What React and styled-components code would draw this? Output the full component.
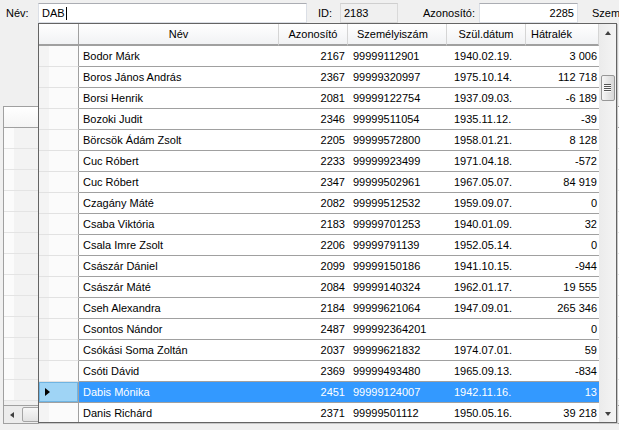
import React from "react";
import styled, { createGlobalStyle } from "styled-components";

const GlobalStyle = createGlobalStyle`
  html, body {
    margin: 0;
    padding: 0;
    background: #f0f0f0;
  }
  body {
    font-family: "Liberation Sans", Arial, sans-serif;
    font-size: 11px;
    color: #000;
    overflow: hidden;
  }
`;

const rows = [
  ["Bodor Márk", "2167", "99999112901", "1940.02.19.", "3 006"],
  ["Boros János András", "2367", "99999320997", "1975.10.14.", "112 718"],
  ["Borsi Henrik", "2081", "99999122754", "1937.09.03.", "-6 189"],
  ["Bozoki Judit", "2346", "99999511054", "1935.11.12.", "-39"],
  ["Börcsök Ádám Zsolt", "2205", "99999572800", "1958.01.21.", "8 128"],
  ["Cuc Róbert", "2233", "99999923499", "1971.04.18.", "-572"],
  ["Cuc Róbert", "2347", "99999502961", "1967.05.07.", "84 919"],
  ["Czagány Máté", "2082", "99999512532", "1959.09.07.", "0"],
  ["Csaba Viktória", "2183", "99999701253", "1940.01.09.", "32"],
  ["Csala Imre Zsolt", "2206", "99999791139", "1952.05.14.", "0"],
  ["Császár Dániel", "2099", "99999150186", "1941.10.15.", "-944"],
  ["Császár Máté", "2084", "99999140324", "1962.01.17.", "19 555"],
  ["Cseh Alexandra", "2184", "99999621064", "1947.09.01.", "265 346"],
  ["Csontos Nándor", "2487", "999992364201", "", "0"],
  ["Csókási Soma Zoltán", "2037", "99999621832", "1974.07.01.", "59"],
  ["Csóti Dávid", "2369", "99999493480", "1965.09.13.", "-834"],
  ["Dabis Mónika", "2451", "99999124007", "1942.11.16.", "13"],
  ["Danis Richárd", "2371", "99999501112", "1950.05.16.", "39 218"],
];

const SELECTED = 16;

const columns = [
  { title: "Név", head: "center", align: "left", pad: 4 },
  { title: "Azonosító", head: "center", align: "right", pad: 3 },
  { title: "Személyiszám", head: "left", headPad: 9, align: "left", pad: 5 },
  { title: "Szül.dátum", head: "center", align: "left", pad: 7 },
  { title: "Hátralék", head: "left", headPad: 5, align: "right", pad: 2 },
];

const Window = styled.div`
  position: relative;
  width: 619px;
  height: 430px;
  overflow: hidden;
  background: #f0f0f0;
`;

const TopBar = styled.div`
  display: flex;
  align-items: center;
  height: 20px;
  padding: 3px 0 0 6px;
  white-space: nowrap;
`;

const Label = styled.span`
  flex: none;
  width: ${(p) => p.$w}px;
  margin-left: ${(p) => p.$ml || 0}px;
`;

const TextBox = styled.div`
  box-sizing: border-box;
  flex: none;
  width: ${(p) => p.$w}px;
  height: 20px;
  display: flex;
  align-items: center;
  justify-content: ${(p) => (p.$right ? "flex-end" : "flex-start")};
  padding: 0 3px;
  background: ${(p) => (p.$readOnly ? "#f0f0f0" : "#fff")};
  border: 1px solid ${(p) => (p.$readOnly ? "#d9d9d9" : "#dbdfe6")};
  border-top-color: ${(p) => (p.$readOnly ? "#cfcfcf" : "#abadb3")};
`;

const Caret = styled.span`
  display: inline-block;
  width: 1px;
  height: 13px;
  margin-left: 1px;
  background: #000;
`;

/* the form's own grid, mostly hidden under the dropdown */
const BackGrid = styled.div`
  box-sizing: border-box;
  display: flex;
  flex-direction: column;
  margin: 83px 0 0 3px;
  width: 640px;
  height: 318px;
  border-top: 1px solid #a0a0a0;
  border-left: 1px solid #a0a0a0;
  border-bottom: 1px solid #a0a0a0;
  overflow: hidden;
`;

const BackHeader = styled.div`
  flex: none;
  height: 20px;
  border-bottom: 1px solid #a0a0a0;
  background: linear-gradient(#ffffff, #f4f4f4);
`;

const BackRow = styled.div`
  flex: none;
  height: 20px;
  border-bottom: 1px solid #e4e4e4;
  background: linear-gradient(to right, #fbfbfb 0 10px, #f3f3f3 10px 34px, #fff 34px);
`;

const HScroll = styled.div`
  flex: none;
  margin-top: auto;
  height: 17px;
  display: flex;
  align-items: center;
  border-top: 1px solid #a0a0a0;
  background: #ececec;
`;

const ArrowLeft = styled.span`
  width: 0;
  height: 0;
  margin-left: 6px;
  border-top: 3px solid transparent;
  border-bottom: 3px solid transparent;
  border-right: 4px solid #404040;
`;

const HThumb = styled.span`
  box-sizing: border-box;
  margin-left: 8px;
  width: 200px;
  height: 15px;
  border: 1px solid #a4a4a4;
  border-radius: 2px;
  background: linear-gradient(#f7f7f7, #e2e2e2);
`;

/* dropdown list overlaying the form */
const Popup = styled.div`
  box-sizing: border-box;
  position: absolute;
  top: 23px;
  left: 38px;
  width: 579px;
  height: 400px;
  display: flex;
  border: 1px solid #646464;
  background: #fff;
  box-shadow: 1px 1px 0 #c8c8c8;
`;

const GridArea = styled.div`
  flex: 1;
  overflow: hidden;
`;

const GridRow = styled.div`
  display: grid;
  grid-template-columns: 40px 200px 69px 99px 79px 73px;
`;

const HeadCell = styled.div`
  box-sizing: border-box;
  height: 22px;
  padding: 0 ${(p) => p.$pad || 0}px;
  line-height: 20px;
  text-align: ${(p) => p.$align};
  white-space: nowrap;
  overflow: hidden;
  background: linear-gradient(#ffffff, #f1f2f4);
  border-right: 1px solid ${(p) => (p.$corner ? "#a0a0a0" : "#d5d5d5")};
  border-bottom: 2px solid #a0a0a0;
`;

const RowHead = styled.div`
  box-sizing: border-box;
  height: 21px;
  display: flex;
  align-items: center;
  padding-left: 6px;
  border-right: 1px solid #a0a0a0;
  border-bottom: 1px solid ${(p) => (p.$selected ? "#a0a0a0" : "#e2e2e2")};
  background: ${(p) =>
    p.$selected
      ? "#9fd4f5"
      : "linear-gradient(to right, #f4f4f4 0 10px, #fbfbfb 10px)"};
  box-shadow: ${(p) => (p.$selected ? "inset 0 0 0 1px #6fb4e2" : "none")};
`;

const Pointer = styled.span`
  width: 0;
  height: 0;
  border-top: 4px solid transparent;
  border-bottom: 4px solid transparent;
  border-left: 5px solid #000;
`;

const Cell = styled.div`
  box-sizing: border-box;
  height: 21px;
  padding: 0 ${(p) => p.$pad}px;
  line-height: 20px;
  text-align: ${(p) => p.$align};
  white-space: nowrap;
  overflow: hidden;
  border-bottom: 1px solid #a0a0a0;
  background: ${(p) => (p.$selected ? "#3399ff" : "#fff")};
  color: ${(p) => (p.$selected ? "#fff" : "#000")};
`;

const VScroll = styled.div`
  flex: none;
  width: 17px;
  display: flex;
  flex-direction: column;
  align-items: center;
  background: linear-gradient(to right, #ebebeb, #f4f4f4);
`;

const ArrowBox = styled.div`
  flex: none;
  height: 17px;
  display: flex;
  align-items: center;
  justify-content: center;
  margin-top: ${(p) => (p.$bottom ? "auto" : "0")};
`;

const Arrow = styled.span`
  width: 0;
  height: 0;
  border-left: 3.5px solid transparent;
  border-right: 3.5px solid transparent;
  ${(p) =>
    p.$down
      ? "border-top: 4px solid #404040;"
      : "border-bottom: 4px solid #404040;"}
`;

const Thumb = styled.div`
  box-sizing: border-box;
  flex: none;
  width: 14px;
  height: 26px;
  margin-top: 34px;
  display: flex;
  align-items: center;
  justify-content: center;
  border: 1px solid #979797;
  border-radius: 2px;
  background: linear-gradient(to right, #f6f6f6, #e3e3e3 60%, #d8d8d8);
`;

const Grip = styled.span`
  width: 7px;
  height: 8px;
  background: repeating-linear-gradient(#555 0 1px, #fafafa 1px 2px);
`;

export default function App() {
  return (
    <Window>
      <GlobalStyle />
      <TopBar>
        <Label $w={32}>Név:</Label>
        <TextBox $w={269}>
          DAB
          <Caret />
        </TextBox>
        <Label $w={22} $ml={11}>
          ID:
        </Label>
        <TextBox $w={58} $readOnly>
          2183
        </TextBox>
        <Label $w={56} $ml={25}>
          Azonosító:
        </Label>
        <TextBox $w={99} $right>
          2285
        </TextBox>
        <Label $w={40} $ml={14}>
          Személyiszám:
        </Label>
      </TopBar>

      <BackGrid>
        <BackHeader />
        {Array.from({ length: 13 }, (_, i) => (
          <BackRow key={i} />
        ))}
        <HScroll>
          <ArrowLeft />
          <HThumb />
        </HScroll>
      </BackGrid>

      <Popup>
        <GridArea>
          <GridRow>
            <HeadCell $corner />
            {columns.map((c) => (
              <HeadCell key={c.title} $align={c.head} $pad={c.headPad}>
                {c.title}
              </HeadCell>
            ))}
          </GridRow>
          {rows.map((r, i) => {
            const sel = i === SELECTED;
            return (
              <GridRow key={i}>
                <RowHead $selected={sel}>{sel && <Pointer />}</RowHead>
                {r.map((v, j) => (
                  <Cell
                    key={j}
                    $align={columns[j].align}
                    $pad={columns[j].pad}
                    $selected={sel}
                  >
                    {v}
                  </Cell>
                ))}
              </GridRow>
            );
          })}
        </GridArea>
        <VScroll>
          <ArrowBox>
            <Arrow />
          </ArrowBox>
          <Thumb>
            <Grip />
          </Thumb>
          <ArrowBox $bottom>
            <Arrow $down />
          </ArrowBox>
        </VScroll>
      </Popup>
    </Window>
  );
}
